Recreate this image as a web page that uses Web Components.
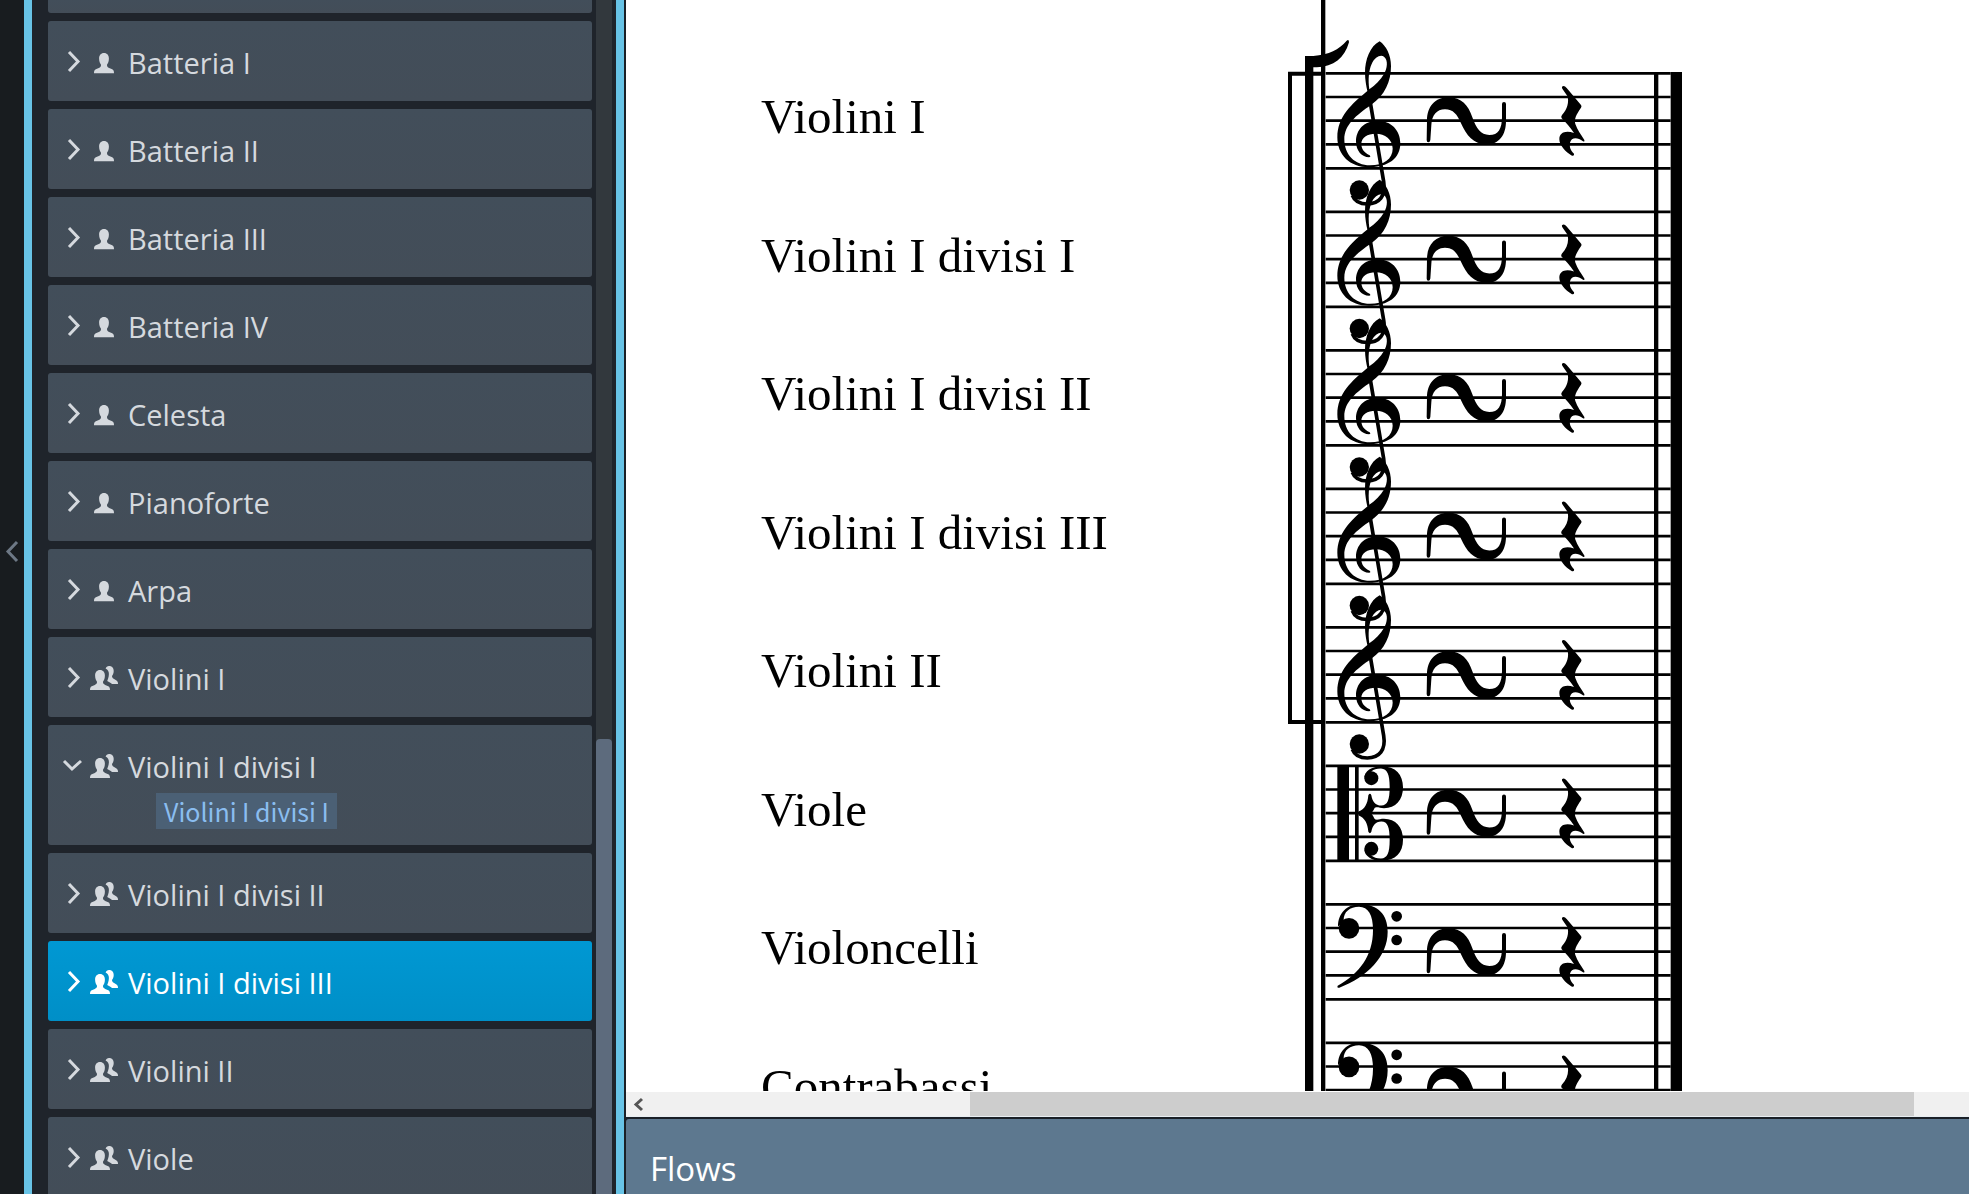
<!DOCTYPE html>
<html lang="it">
<head>
<meta charset="utf-8">
<title>Setup</title>
<style>
    html, body {
        height: 100%;
        margin: 0;
    }
    body {
        background: #1f242b;
        font-family: "Open Sans", sans-serif;
        overflow: hidden;
    }
</style>
</head>
<body>
<setup-window>
    <side-rail slot="rail"></side-rail>
    <player-list slot="players">
        <player-card cut></player-card>
        <player-card>Batteria I</player-card>
        <player-card>Batteria II</player-card>
        <player-card>Batteria III</player-card>
        <player-card>Batteria IV</player-card>
        <player-card>Celesta</player-card>
        <player-card>Pianoforte</player-card>
        <player-card>Arpa</player-card>
        <player-card section>Violini I</player-card>
        <player-card section open>Violini I divisi I<instrument-chip slot="instruments">Violini I divisi I</instrument-chip></player-card>
        <player-card section>Violini I divisi II</player-card>
        <player-card section selected>Violini I divisi III</player-card>
        <player-card section>Violini II</player-card>
        <player-card section>Viole</player-card>
    </player-list>
    <score-view slot="score">
        <staff-label clef="treble">Violini I</staff-label>
        <staff-label clef="treble">Violini I divisi I</staff-label>
        <staff-label clef="treble">Violini I divisi II</staff-label>
        <staff-label clef="treble">Violini I divisi III</staff-label>
        <staff-label clef="treble">Violini II</staff-label>
        <staff-label clef="alto">Viole</staff-label>
        <staff-label clef="bass">Violoncelli</staff-label>
        <staff-label clef="bass">Contrabassi</staff-label>
    </score-view>
    <score-scrollbar slot="score"></score-scrollbar>
    <flows-panel slot="score">Flows</flows-panel>
</setup-window>

<script>
// attach an open shadow root filled from a template string
function render(host, html) {
    const template = document.createElement('template');
    template.innerHTML = html;
    host.attachShadow({ mode: 'open' });
    host.shadowRoot.appendChild(template.content.cloneNode(true));
}

// <setup-window> rail | players | score
class SetupWindow extends HTMLElement {
    constructor() {
        super();
        render(this, `
            <style>
                :host {
                    display: flex;
                    height: 100vh;
                }
                main {
                    flex: 1;
                    min-width: 0;
                    display: flex;
                    flex-direction: column;
                    border-left: 2px solid #1b2026;
                }
            </style>
            <slot name="rail"></slot>
            <slot name="players"></slot>
            <main><slot name="score"></slot></main>
        `);
    }
}

// <side-rail> the strip that hides the left panel
class SideRail extends HTMLElement {
    constructor() {
        super();
        render(this, `
            <style>
                :host {
                    display: flex;
                    flex: none;
                    width: 24px;
                    background: #181c1f;
                }
                button {
                    display: flex;
                    align-items: center;
                    justify-content: center;
                    width: 100%;
                    padding: 0 0 92px;
                    border: 0;
                    background: none;
                }
            </style>
            <button aria-label="Hide panel">
                <svg width="24" height="24" viewBox="0 0 24 24" fill="none" stroke="#6d7885" stroke-width="3"><path d="M17 3 8 12.500 17 22"/></svg>
            </button>
        `);
    }
}

// <player-list> column of cards with its scrollbar
class PlayerList extends HTMLElement {
    constructor() {
        super();
        render(this, `
            <style>
                :host {
                    display: flex;
                    flex: none;
                    gap: 4px;
                    padding: 0 4px 0 16px;
                    border: solid #68c3e6;
                    border-width: 0 8px;
                    background: #1f242b;
                    overflow: hidden;
                }
                .cards {
                    display: flex;
                    flex-direction: column;
                    gap: 8px;
                    width: 544px;
                }
                .track {
                    display: flex;
                    flex-direction: column;
                    justify-content: flex-end;
                    width: 16px;
                    background: #32383d;
                }
                .thumb {
                    height: 455px;
                    border-radius: 4px 4px 0 0;
                    background: #5d6b7d;
                }
            </style>
            <div class="cards"><slot></slot></div>
            <div class="track"><div class="thumb"></div></div>
        `);
    }
}

const PERSON = 'M10 0C13.200 0 14.900 2.400 14.900 5.600C14.900 8.600 14 10.400 13 11.800C12.900 13.500 13.600 14.300 15.200 15L18.200 16.200C19.700 16.900 20 18.200 20 20.300H0C0 18.200.300 16.900 1.800 16.200L4.800 15C6.400 14.300 7.100 13.500 7 11.800C6 10.400 5.100 8.600 5.100 5.600C5.100 2.400 6.800 0 10 0Z';
const BEHIND = 'M19 0C22.300 0 23.700 2.300 23.700 5C23.700 7.300 23 8.600 22 10C22 11.300 22.500 12 23.700 12.700L26.500 14.500C27.700 15.300 28 16.300 28 18H22C21 16.800 19 16 17.200 15C17.600 13.600 18.900 11.300 18.900 7.900C18.900 5.300 17.900 3.600 15.600 2.400C16.200 .9 17.300 0 19 0Z';

// <player-card> one player; "section" shows the group icon
class PlayerCard extends HTMLElement {
    constructor() {
        super();
        const open = this.hasAttribute('open');
        const icon = this.hasAttribute('section')
            ? `<path d="${BEHIND}" transform="translate(2 0)"/><path d="${PERSON}" transform="translate(2 4)"/>`
            : `<path d="${PERSON}" transform="translate(6 3)"/>`;
        const head = `
            <button aria-expanded="${open}">
                <svg width="20" height="24" viewBox="0 0 20 24" fill="none" stroke="currentColor" stroke-width="3"><path d="${open ? 'M2 7 10 15 19 7' : 'M7 2 16 11.500 7 21'}"/></svg>
                <svg class="who" width="32" height="24" viewBox="0 0 32 24" fill="currentColor">${icon}</svg>
                <span><slot></slot></span>
            </button>
            <slot name="instruments"></slot>`;
        render(this, `
            <style>
                :host {
                    display: block;
                    flex: none;
                    box-sizing: border-box;
                    min-height: 80px;
                    padding: 22px 14px 16px;
                    border-radius: 3px;
                    background: linear-gradient(#424e5a, #434d58);
                    color: #d5d9de;
                }
                :host([selected]) {
                    background: linear-gradient(#0098d3, #008fc7);
                    color: #fff;
                }
                :host([cut]) {
                    min-height: 13px;
                    padding: 0;
                    border-radius: 0 0 3px 3px;
                }
                button {
                    display: flex;
                    align-items: center;
                    gap: 6px;
                    width: 100%;
                    height: 38px;
                    padding: 0;
                    border: 0;
                    background: none;
                    color: inherit;
                    font: 29px/36px "Open Sans", sans-serif;
                }
                span {
                    padding: 2px 0 0 2px;
                }
            </style>
            ${this.hasAttribute('cut') ? '' : head}
        `);
    }
}

// <instrument-chip> instrument held by an open player
class InstrumentChip extends HTMLElement {
    constructor() {
        super();
        render(this, `
            <style>
                :host {
                    display: block;
                    width: fit-content;
                    margin: 8px 0 0 94px;
                    padding: 0 8px;
                    background: #4b6075;
                    color: #8abdf0;
                    font: 25px/36px "Noto Sans CJK SC", sans-serif;
                }
            </style>
            <slot></slot>
        `);
    }
}

// music glyphs, drawn on a first staff whose lines run from y=220 to y=505
const PITCH = 415.5;
const CLEFS = {
    treble: `
        <path fill-rule="evenodd" d="M299 124C270 138 255 180 255 218C255 240 259 258 262 273C215 312 172 350 172 412C172 465 210 502 266 502C325 502 361 475 361 430C361 390 333 362 293 362C252 362 228 390 228 424C228 454 246 471 267 472Q274 471 269 466C252 458 244 446 244 432C244 413 262 401 287 401C315 401 338 418 338 446C338 476 312 496 270 496C224 496 193 464 193 418C193 375 228 346 273 315C315 285 333 245 333 198C333 165 318 137 299 124Z
        M268 268C264 240 266 212 275 192C285 170 302 163 312 170C325 180 322 205 312 222C302 240 286 255 268 268Z"/>
        <path fill="none" stroke="#000" stroke-width="11" d="M271 308L311 545C318 588 298 612 262 612C240 612 224 604 217 586"/>
        <circle cx="238" cy="570" r="29"/>`,
    alto: `
        <path d="M172 220h35v286h-35zM225 220h11v286h-11z"/>
        <g id="lobe">
            <path d="M253 256C253 236 275 221 305 221C347 221 369 246 369 284C369 322 347 347 312 347C298 347 288 341 283 348C280 354 278 358 274 363H236V357C254 350 263 334 265 308Q270 300 274 308C277 326 286 339 304 339C323 339 329 322 329 283C329 246 322 229 303 228C289 228 281 231 275 236Z"/>
            <circle cx="274" cy="257" r="21"/>
        </g>
        <use href="#lobe" transform="matrix(1 0 0 -1 0 726)"/>`,
    bass: `
        <path d="M174 287C174 247 200 220 240 220C295 220 323 252 323 302C323 377 262 437 178 470Q170 471 173 464C237 429 279 375 279 297C279 252 265 227 237 227C210 227 190 242 191 269Z"/>
        <circle cx="207" cy="292" r="31"/>
        <circle cx="350" cy="256" r="16"/>
        <circle cx="350" cy="327" r="16"/>`
};
const STAFF = `
    <path fill="none" stroke="#000" stroke-width="8" d="M137 220H1172M137 291H1172M137 362H1172M137 433H1172M137 505H1172"/>
    <path d="M441 362C441 320 465 292 505 292C545 292 565 316 577 352C589 386 602 405 628 405C655 405 666 386 666 350V312Q666 306 672 306Q678 306 678 312V362C678 404 658 433 620 433C580 433 559 406 543 370C531 343 520 328 495 328C470 328 455 346 454 376L451 420Q450 427 445 427Q440 427 440 420Z"/>
    <path d="M846 260Q852 254 860 264L903 315Q906 319 903 323C888 345 882 357 886 372C892 390 903 404 913 420Q915 426 909 424C892 411 874 412 870 428C868 443 872 450 882 461Q884 468 876 467C855 455 838 435 838 418C838 398 856 390 882 399C870 382 858 368 845 355Q842 350 846 345C862 328 868 305 862 288L848 268Q845 264 846 260Z"/>`;

// <score-view> staff names beside the bracketed system
class ScoreView extends HTMLElement {
    constructor() {
        super();
        const staves = [...this.children].map((label, i) =>
            `<g transform="translate(0 ${i * PITCH})">${STAFF}<use href="#${label.getAttribute('clef')}"/></g>`
        ).join('');
        render(this, `
            <style>
                :host {
                    display: flex;
                    flex: 1;
                    min-height: 0;
                    overflow: hidden;
                    padding-left: 135px;
                    border-bottom: 1px solid #fff;
                    background: #fff;
                    color: #000;
                }
                .names {
                    display: grid;
                    flex: none;
                    grid-template-rows: repeat(8, 1fr);
                    align-items: center;
                    width: 519px;
                    height: 1108px;
                    padding-top: 48px;
                }
                svg {
                    flex: none;
                }
            </style>
            <div class="names"><slot></slot></div>
            <svg width="420" height="1092" viewBox="0 0 1260 3276" aria-hidden="true">
                <defs>
                    <g id="treble">${CLEFS.treble}</g>
                    <g id="alto">${CLEFS.alto}</g>
                    <g id="bass">${CLEFS.bass}</g>
                </defs>
                <path d="M123 0h13v3276h-13zM75 168h25v3108h-25zM1122 217h13v3059h-13zM1172 216h34v3060h-34z"/>
                <path d="M75 168H100C148 163 176 150 200 122Q207 117 207 127C193 175 162 200 110 202H75Z"/>
                <path fill="none" stroke="#000" stroke-width="12" d="M130 221H30V2166H130"/>
                ${staves}
            </svg>
        `);
    }
}

// <staff-label> name printed before a staff
class StaffLabel extends HTMLElement {
    constructor() {
        super();
        render(this, `
            <style>
                :host {
                    display: block;
                    font: 49px/56px "Liberation Serif", serif;
                    white-space: nowrap;
                }
            </style>
            <slot></slot>
        `);
    }
}

// <score-scrollbar> horizontal scrollbar under the score
class ScoreScrollbar extends HTMLElement {
    constructor() {
        super();
        render(this, `
            <style>
                :host {
                    display: grid;
                    flex: none;
                    grid-template-columns: 344fr 944fr 55fr;
                    height: 24px;
                    border-bottom: 1px solid #e8eef2;
                    background: #f0f0f0;
                }
                button {
                    display: flex;
                    align-items: center;
                    width: 24px;
                    padding: 0;
                    border: 0;
                    background: none;
                }
                .thumb {
                    background: #cdcdcd;
                }
            </style>
            <button aria-label="Scroll left">
                <svg width="24" height="24" viewBox="0 0 24 24" fill="none" stroke="#555" stroke-width="3"><path d="M16 7 10 12.500 16 18"/></svg>
            </button>
            <div class="thumb"></div>
        `);
    }
}

// <flows-panel> header of the flows area
class FlowsPanel extends HTMLElement {
    constructor() {
        super();
        render(this, `
            <style>
                :host {
                    display: block;
                    flex: none;
                    box-sizing: border-box;
                    height: 77px;
                    padding-top: 2px;
                    background: #1a2027;
                    color: #fff;
                }
                h2 {
                    box-sizing: border-box;
                    height: 100%;
                    margin: 0;
                    padding: 26px 24px 0;
                    border-radius: 3px 0 0 0;
                    background: #5d788f;
                    font-size: 33px;
                    font-weight: 400;
                    line-height: 48px;
                }
            </style>
            <h2><slot></slot></h2>
        `);
    }
}

customElements.define('setup-window', SetupWindow);
customElements.define('side-rail', SideRail);
customElements.define('player-list', PlayerList);
customElements.define('player-card', PlayerCard);
customElements.define('instrument-chip', InstrumentChip);
customElements.define('score-view', ScoreView);
customElements.define('staff-label', StaffLabel);
customElements.define('score-scrollbar', ScoreScrollbar);
customElements.define('flows-panel', FlowsPanel);
</script>
</body>
</html>
